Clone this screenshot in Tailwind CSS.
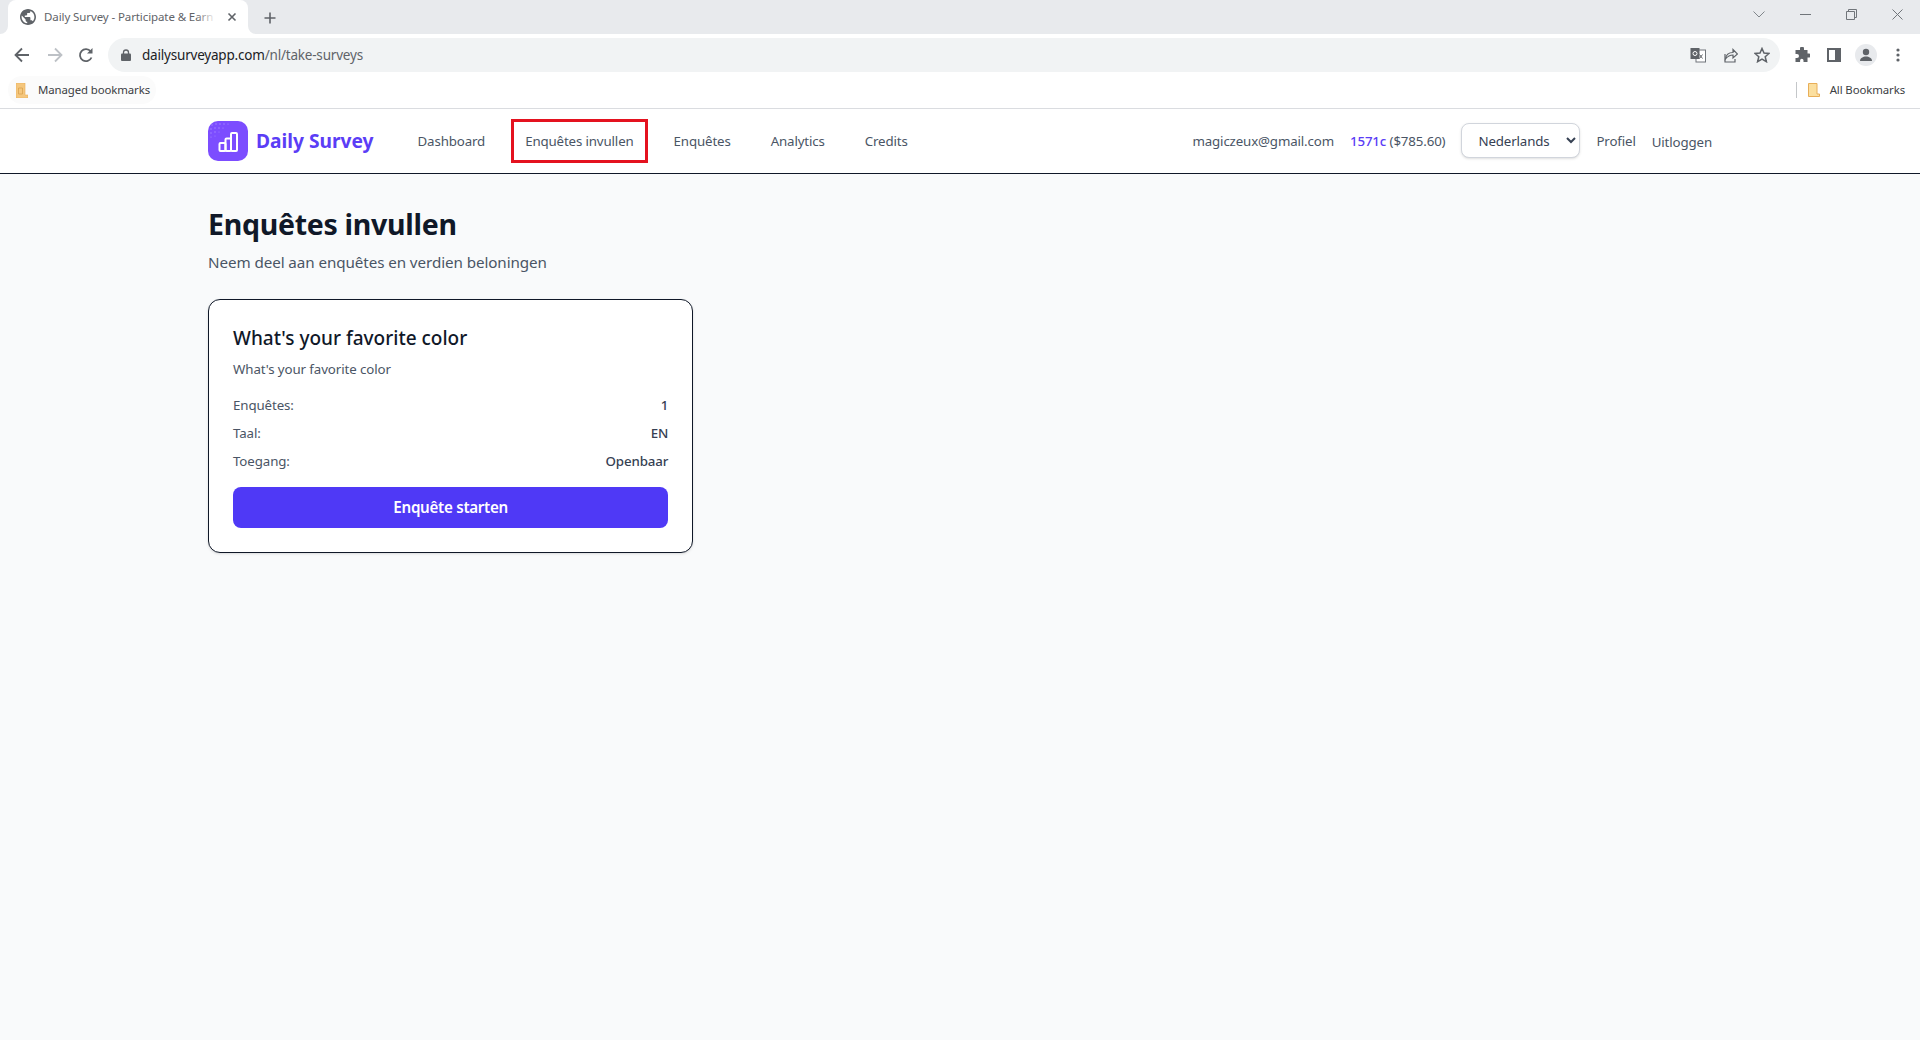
<!DOCTYPE html>
<html lang="nl">
<head>
<meta charset="utf-8">
<title>Daily Survey</title>
<script src="https://cdn.jsdelivr.net/npm/@tailwindcss/browser@4"></script>
</head>
<body class="h-[1040px] overflow-hidden bg-gray-50 font-['Noto_Sans','Open_Sans',sans-serif]">

<!-- browser tab strip -->
<div class="flex h-[34px] items-end bg-[#e8eaed] pl-2">
  <div class="relative flex h-[34px] w-[240px] items-center rounded-t-lg bg-white pl-[12px]">
    <svg class="absolute bottom-0 -left-2 h-2 w-2" viewBox="0 0 8 8"><path d="M8 0v8H0a8 8 0 0 0 8-8z" fill="#fff"/></svg>
    <svg class="absolute bottom-0 -right-2 h-2 w-2" viewBox="0 0 8 8"><path d="M0 0v8h8a8 8 0 0 1-8-8z" fill="#fff"/></svg>
    <svg class="h-[16px] w-[16px] shrink-0" viewBox="2 2 20 20"><path fill="#5f6368" d="M12 2C6.480 2 2 6.480 2 12s4.480 10 10 10 10-4.480 10-10S17.520 2 12 2zm-1 17.930c-3.950-.49-7-3.850-7-7.930 0-.62.08-1.210.21-1.790L9 15v1c0 1.100.9 2 2 2v1.930zm6.900-2.540c-.26-.81-1-1.390-1.900-1.390h-1v-3c0-.55-.45-1-1-1H8v-2h2c.55 0 1-.45 1-1V7h2c1.100 0 2-.9 2-2v-.41c2.930 1.190 5 4.060 5 7.410 0 2.080-.8 3.970-2.100 5.390z"/></svg>
    <span class="relative ml-[8px] w-[172px] overflow-hidden whitespace-nowrap text-[11.5px] tracking-[-0.1px] text-[#5f6368]">Daily Survey - Participate &amp; Earn Rewards<span class="absolute inset-y-0 right-0 w-5 bg-linear-to-r from-white/0 to-white"></span></span>
    <svg class="ml-[11px] h-[10px] w-[10px] shrink-0" viewBox="0 0 10 10"><path d="M1.500 1.500l7 7m0-7l-7 7" stroke="#5f6368" stroke-width="1.600"/></svg>
  </div>
  <svg class="mb-[10px] ml-[16px] h-[12px] w-[12px]" viewBox="0 0 12 12"><path d="M6 .5v11M.5 6h11" stroke="#5f6368" stroke-width="1.600"/></svg>
  <div class="ml-auto flex h-full items-start">
    <svg class="mr-[35px] mt-[11px] h-[7px] w-[12px]" viewBox="0 0 12 7"><path d="M.5.5L6 6l5.500-5.500" fill="none" stroke="#80868b" stroke-width="1"/></svg>
    <svg class="mr-[35px] mt-[14px] h-[1px] w-[11px]" viewBox="0 0 11 1"><path d="M0 .5h11" stroke="#70757a"/></svg>
    <svg class="mr-[35px] mt-[9px] h-[11px] w-[11px]" viewBox="0 0 11 11"><path d="M.5 2.500h8v8h-8zM2.500 2.500v-2h8v8h-2" fill="none" stroke="#70757a"/></svg>
    <svg class="mr-[17px] mt-[9px] h-[11px] w-[11px]" viewBox="0 0 11 11"><path d="M.5.500l10 10m0-10l-10 10" stroke="#70757a"/></svg>
  </div>
</div>

<!-- browser toolbar -->
<div class="flex h-[40px] items-start bg-white pl-[14px] pr-[20px] pt-[4px]">
  <div class="flex h-[34px] shrink-0 items-center">
    <svg class="h-[16px] w-[16px] shrink-0" viewBox="0 0 16 16"><path d="M15 8H2m6-6.500L1.500 8 8 14.500" fill="none" stroke="#5f6368" stroke-width="1.800"/></svg>
    <svg class="ml-[17px] h-[16px] w-[16px] shrink-0" viewBox="0 0 16 16"><path d="M1 8h13M8 1.500L14.500 8 8 14.500" fill="none" stroke="#bdc1c6" stroke-width="1.800"/></svg>
    <svg class="ml-[15px] h-[16px] w-[16px] shrink-0" viewBox="0 0 16 16"><path d="M13.500 10.500a6 6 0 1 1-.8-6" fill="none" stroke="#5f6368" stroke-width="1.800"/><path d="M14.500 1v5.500H9z" fill="#5f6368"/></svg>
  </div>
  <div class="ml-[14px] flex h-[34px] flex-1 items-center rounded-full bg-[#f1f3f4] pl-[13px] pr-[10px]">
    <svg class="h-[12px] w-[10px] shrink-0" viewBox="0 0 10 12"><path d="M2.500 5V3.500a2.500 2.500 0 0 1 5 0V5" fill="none" stroke="#5f6368" stroke-width="1.300"/><rect y="4.500" width="10" height="7.500" rx="1" fill="#5f6368"/></svg>
    <span class="ml-[11px] text-[13.5px] tracking-[-0.2px] text-[#202124]">dailysurveyapp.com<span class="text-[#5f6368]">/nl/take-surveys</span></span>
    <div class="ml-auto flex items-center gap-[16px]">
      <svg class="h-[16px] w-[16px]" viewBox="0 0 16 16"><rect x="6" y="3" width="9.500" height="12" fill="#fff" stroke="#70757a"/><rect x=".5" y="1" width="9" height="11" fill="#5f6368"/><circle cx="5" cy="6.500" r="2" fill="none" stroke="#fff"/><path d="M9.500 7.500l3 4m0-4l-3 4" stroke="#5f6368"/></svg>
      <svg class="h-[16px] w-[16px]" viewBox="0 0 16 16"><path d="M3 7v8h10v-3" fill="none" stroke="#5f6368" stroke-width="1.200"/><path d="M3.500 12c.5-4 3.500-6.500 7.500-6.500V2.500l4.500 4.500-4.500 4V8c-3 0-5.500 1.500-7.500 4z" fill="none" stroke="#5f6368" stroke-width="1.200"/></svg>
      <svg class="h-[16px] w-[16px]" viewBox="0 0 16 16"><path d="M8 1.500l2 4.600 5 .4-3.800 3.300 1.200 4.900L8 12.100l-4.400 2.600 1.200-4.900L1 6.500l5-.4z" fill="none" stroke="#5f6368" stroke-width="1.500"/></svg>
    </div>
  </div>
  <div class="flex h-[34px] shrink-0 items-center">
    <svg class="ml-[14px] h-[16px] w-[16px] shrink-0" viewBox="0 0 16 16"><path d="M6 1.500a2 2 0 0 1 4 0V3h3.500v3.500H15a2 2 0 0 1 0 4h-1.500V15h-4v-1.500a1.700 1.700 0 0 0-3.400 0V15H1.500v-4H3a2 2 0 0 0 0-4H1.500V3H6z" fill="#5f6368"/></svg>
    <svg class="ml-[17px] h-[14px] w-[14px] shrink-0" viewBox="0 0 14 14"><path d="M0 0h14v14H0z" fill="#5f6368"/><path d="M2 2h6v10H2z" fill="#fff"/></svg>
    <div class="ml-[14px] flex h-[22px] w-[22px] shrink-0 items-center justify-center rounded-full bg-[#e8eaed]">
      <svg class="h-[14px] w-[14px]" viewBox="0 0 14 14"><circle cx="7" cy="4" r="3.200" fill="#5f6368"/><path d="M1 13c0-3 3-4.500 6-4.500s6 1.500 6 4.500z" fill="#5f6368"/></svg>
    </div>
    <svg class="ml-[19px] h-[14px] w-[4px] shrink-0" viewBox="0 0 4 14"><circle cx="2" cy="2" r="1.600" fill="#5f6368"/><circle cx="2" cy="7" r="1.600" fill="#5f6368"/><circle cx="2" cy="12" r="1.600" fill="#5f6368"/></svg>
  </div>
</div>

<!-- bookmarks bar -->
<div class="flex h-[35px] items-center border-b border-[#dadce0] bg-white pb-[2px] pl-[8px] pr-[15px]">
  <div class="flex h-[28px] items-center rounded-full bg-[#fbfbfb] pl-[8px] pr-[6px]">
    <svg class="h-[15px] w-[12px]" viewBox="0 0 12 15"><path d="M0 0h9v12h3v3H0z" fill="#f5c77e" stroke="#e8ae58" stroke-width=".6"/><path d="M2.500 5h4v6h-4z" fill="none" stroke="#d9a24f" stroke-width=".8"/></svg>
    <span class="ml-[10px] text-[11.4px] tracking-[-0.1px] text-[#3c4043]">Managed bookmarks</span>
  </div>
  <div class="ml-auto h-[16px] w-px bg-[#c4c7c9]"></div>
  <svg class="ml-[11px] h-[14px] w-[12px]" viewBox="0 0 12 14"><path d="M.5.500h8.500v10.500h2.500v2.500H.500z" fill="#fbdf9f" stroke="#e8ae58"/></svg>
  <span class="ml-[10px] text-[11.4px] tracking-[-0.1px] text-[#3c4043]">All Bookmarks</span>
</div>

<!-- app nav -->
<nav class="border-b border-gray-900 bg-white">
  <div class="mx-auto flex h-[64px] w-[1536px] items-center justify-between px-4">
    <div class="flex items-center">
      <a class="flex items-center gap-[8px]">
        <span class="flex h-10 w-10 items-center justify-center rounded-[10px] bg-[#7c4dff]">
          <svg class="h-10 w-10" viewBox="0 0 40 40" fill="none">
            <g fill="#a98bff"><circle cx="4" cy="4" r=".7"/><circle cx="8" cy="3" r=".7"/><circle cx="12" cy="3" r=".7"/><circle cx="16" cy="3" r=".7"/><circle cx="20" cy="3" r=".6"/><circle cx="3" cy="8" r=".7"/><circle cx="7" cy="7" r=".7"/><circle cx="11" cy="7" r=".7"/><circle cx="15" cy="7" r=".6"/><circle cx="3" cy="12" r=".7"/><circle cx="7" cy="11" r=".7"/><circle cx="11" cy="11" r=".5"/><circle cx="3" cy="16" r=".6"/><circle cx="7" cy="15" r=".5"/></g>
            <g stroke="#fff" stroke-width="2"><rect x="11.500" y="22" width="6" height="8" rx="1"/><rect x="17.500" y="17.500" width="5.500" height="12.500" rx="1"/><rect x="23" y="12" width="6" height="18" rx="1"/></g>
          </svg>
        </span>
        <span class="text-[19.2px] font-bold text-[#5b3df6]">Daily Survey</span>
      </a>
      <div class="ml-8 -mt-px flex items-center gap-4 text-[13.3px] leading-[20px] tracking-[-0.14px] text-gray-600">
        <a class="px-3 py-2">Dashboard</a>
        <a class="relative px-3 py-2">Enquêtes invullen<span class="absolute -left-[2px] -right-[2px] -top-[4px] -bottom-[4px] border-[3px] border-[#e4121f]"></span></a>
        <a class="px-3 py-2">Enquêtes</a>
        <a class="px-3 py-2">Analytics</a>
        <a class="px-3 py-2">Credits</a>
      </div>
    </div>
    <div class="-mt-px flex items-center gap-4 text-[13.3px] leading-[20px] tracking-[-0.14px] text-gray-600">
      <span>magiczeux@gmail.com</span>
      <span><span class="font-medium text-[#5b3df6]">1571c</span> ($785.60)</span>
      <select class="h-[35px] w-[119px] rounded-lg border border-gray-300 bg-white pl-3 pr-1 text-[13.3px] text-gray-700 shadow-sm">
        <option>Nederlands</option>
      </select>
      <a>Profiel</a>
      <a class="mt-[2px]">Uitloggen</a>
    </div>
  </div>
</nav>

<!-- main -->
<main class="mx-auto w-[1536px] px-4 pt-[32px]">
  <h1 class="text-[28.5px] leading-[36px] font-bold tracking-[-0.28px] text-gray-900">Enquêtes invullen</h1>
  <p class="mt-2 text-[15.2px] leading-[24px] tracking-[-0.08px] text-gray-600">Neem deel aan enquêtes en verdien beloningen</p>
  <div class="mt-[25px] grid grid-cols-3 gap-6">
    <div class="rounded-xl border border-gray-900 bg-white p-6 shadow-sm">
      <h3 class="text-[19px] leading-[28px] font-medium text-gray-900">What's your favorite color</h3>
      <p class="mt-[7px] text-[13.3px] leading-[20px] tracking-[-0.1px] text-gray-600">What's your favorite color</p>
      <div class="mt-4 flex flex-col gap-2 text-[13.3px] leading-[20px] tracking-[-0.1px]">
        <div class="flex justify-between"><span class="text-gray-600">Enquêtes:</span><span class="font-medium text-gray-700">1</span></div>
        <div class="flex justify-between"><span class="text-gray-600">Taal:</span><span class="font-medium text-gray-700">EN</span></div>
        <div class="flex justify-between"><span class="text-gray-600">Toegang:</span><span class="font-medium text-gray-700">Openbaar</span></div>
      </div>
      <button class="mt-4 flex h-[41px] w-full items-center justify-center rounded-lg bg-[#4f39f6] text-[15.2px] font-semibold tracking-[-0.3px] text-white">Enquête starten</button>
    </div>
  </div>
</main>

</body>
</html>
